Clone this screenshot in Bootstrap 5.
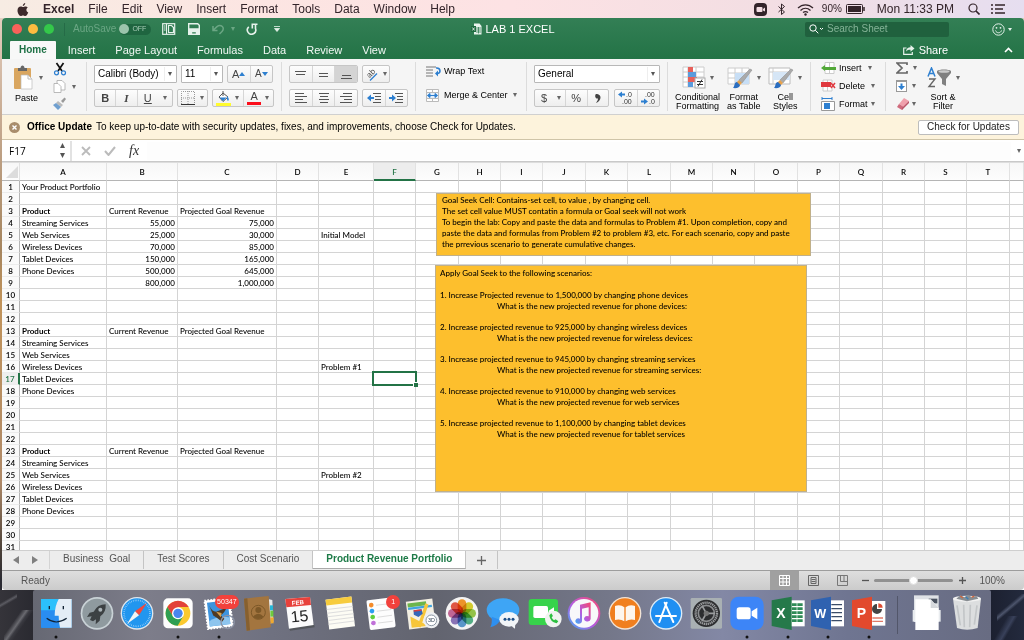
<!DOCTYPE html>
<html lang="en">
<head>
<meta charset="utf-8">
<meta name="viewport" content="width=device-width, initial-scale=1">
<title>LAB 1 EXCEL</title>
<link href="https://cdn.jsdelivr.net/npm/bootstrap@5.3.0/dist/css/bootstrap.min.css" rel="stylesheet">
<style>
:root { --green:#237346; --line:#d4d4d4; }
body { font-family:"Liberation Sans",Arial,sans-serif; font-size:10px; line-height:12px; color:#111; height:100vh; min-height:560px; overflow:hidden;
  background:linear-gradient(180deg,#e9d5c8 0,#c9ad95 110px,#a5855f 250px,#c1935a 300px,#b08a68 480px,#4a4038 550px,#2b2b33 580px); }
a { color:inherit; text-decoration:none; }
button { font:inherit; color:inherit; padding:0; border:0; background:none; display:inline-flex; align-items:center; justify-content:center; }
svg { display:block; flex:none; }
.tri { width:0; height:0; flex:none; border:2px solid transparent; border-top:4px solid #666; border-bottom:0; }

/* system menu bar */
.menubar { height:18px; font-size:12px; color:#33242a; background:linear-gradient(90deg,#f7ece3 0,#fce5e2 25%,#fde2e4 50%,#f3dee3 75%,#e6def0 100%); padding:0 18px 0 17px; }
.menubar nav { gap:14px; }

/* window */
.win { margin-left:2px; border-radius:4px 4px 0 0; min-height:0; background:#fff; }
.head { background:linear-gradient(180deg,#337f55,#237346); color:#fff; border-radius:4px 4px 0 0; }
.titlebar { height:22px; }
.light { width:10px; height:10px; border-radius:50%; }
.autosave { color:#6ba684; }
.toggle { width:32px; height:11px; border-radius:6px; background:#1f6540; color:#a9cdb8; font-size:7px; }
.toggle::before { content:""; width:10px; height:10px; border-radius:50%; background:#9cc4ac; margin-right:3px; }
.doc { font-size:11px; }
.search { width:144px; height:15px; background:#20613e; border-radius:2px; }
.search input { background:none; border:0; outline:0; width:110px; padding:0; color:#fff; font-size:10px; line-height:12px; }
.search input::placeholder { color:#84b397; opacity:1; }
.rtabs { height:19px; font-size:11px; }
.rtabs .nav-link { color:#f1f8f4; padding:0 10px; height:18px; line-height:18px; font-size:11px; border:0; border-radius:0; }
.rtabs .nav-link.active { background:#f8f8f8; color:#1e7145; font-weight:bold; font-size:10px; padding:0 9px; margin-right:2px; border-radius:1px 1px 0 0; }

/* ribbon */
.ribbon { height:56px; background:#f5f5f5; border-bottom:1px solid #d0d0d0; font-size:9px; line-height:10px; color:#000; }
.ribbon button { white-space:nowrap; }
.rg { border-right:1px solid #dcdcdc; padding:0 7px; margin:3px 0; height:49px; flex:none; }
.rg.wide { padding:0 10px; }
.rrows { display:flex; flex-direction:column; gap:6px; padding-top:3px; }
.rrows > div { display:flex; gap:4px; height:18px; }
.bx { display:flex; height:18px; border:1px solid #c6c6c6; border-radius:2px; background:linear-gradient(#fdfdfd,#eee); overflow:hidden; }
.bx button { flex:1 1 0; font-size:11px; color:#444; gap:4px; }
.bx button + button { border-left:1px solid #d6d6d6; }
.bx button.on { background:#d4d4d4; }
.bx button.drop { flex:0 0 14px; border-left:0; }
.pick { height:18px; border:1px solid #b8b8b8; border-radius:1px; appearance:none; padding:0 0 0 3px; font-size:10px; color:#000;
  background:#fff url("data:image/svg+xml,%3Csvg xmlns='http://www.w3.org/2000/svg' width='12' height='16'%3E%3Cpath d='M0 1v14' stroke='%23ddd'/%3E%3Cpath d='M4 6h4l-2 4z' fill='%23555'/%3E%3C/svg%3E") right center no-repeat; }
.w28{width:28px}.w31{width:31px}.w42{width:42px}.w46{width:46px}.w62{width:62px}.w69{width:69px}.w75{width:75px}.w79{width:79px}.w83{width:83px}.w126{width:126px}
.big { flex-direction:column; justify-content:flex-start; line-height:9px; }
.big .pic { display:flex; align-items:center; gap:4px; height:31px; }
.sm { height:18px; justify-content:flex-start; }

/* messages and formula bar */
.update { height:25px; background:#fdf3dc; border-bottom:1px solid #cfc4a8; padding:0 5px 0 7px; color:#000; }
.update button { width:101px; height:15px; border:1px solid #bdbdbd; border-radius:2px; background:#fff; color:#222; }
.fbar { height:22px; border-bottom:1px solid #c9c9c9; background:#fff; }
.namebox { width:50px; border:0; outline:0; padding:0 0 0 7px; font:10px "Open Sans","Noto Sans",sans-serif; color:#000; }
.formula { border:0; outline:0; background:#fdfdfd; height:18px; min-width:0; }

/* sheet */
.sheet { position:relative; overflow:hidden; min-height:0; font-family:Lato,Carlito,sans-serif; font-size:8px; border-top:1px solid #ddd; background:#fff; }
.grid { table-layout:fixed; width:100%; border-collapse:separate; border-spacing:0; line-height:10px; font-weight:500; color:#000; }
.grid th, .grid td { padding:1px 2px 0; height:12px; border-right:1px solid var(--line); border-bottom:1px solid var(--line); white-space:nowrap; overflow:visible; font-size:8px; }
.grid th { font-weight:600; text-align:center; padding:1px 0 0; }
.grid thead th { height:18px; background:linear-gradient(#f7f7f7,#fdfdfd); border-bottom:1px solid #b5b5b5; border-right-color:#e2e2e2; }
.grid tbody th { background:#fafafa; border-right-color:#b5b5b5; border-bottom-color:#ececec; }
.grid thead th.sel { background:#ededed; color:var(--green); border-bottom:2px solid var(--green); }
.grid tbody th.sel { color:var(--green); border-right:2px solid var(--green); background:#eee; }
.grid td.num { text-align:right; }
.grid td.cur { position:relative; }
.grid td.cur::before { content:""; position:absolute; inset:-2px; border:2px solid var(--green); }
.grid td.cur::after { content:""; position:absolute; right:-3px; bottom:-3px; width:5px; height:5px; background:var(--green); border:1px solid #fff; border-width:1px 0 0 1px; }
.corner { width:0; height:0; margin:0 1px 1px auto; border-left:12px solid transparent; border-bottom:12px solid #dcdcdc; }
.note { position:absolute; background:#fdbf2d; border:1px solid #c0b08a; line-height:11px; font-size:8px; color:#000; white-space:nowrap; font-weight:500; }
.note p { margin:0 0 10px; }
.note .ask { display:block; padding-left:57px; }
.note1 { left:434px; top:30px; width:375px; height:63px; padding:1px 5px; }
.note2 { left:433px; top:102px; width:372px; height:227px; padding:2px 4px; }
.note2 .lead-in { margin-bottom:11px; }

/* sheet tabs and status bar */
.stabs { height:21px; background:#ededed; border-top:1px solid #cfcfcf; border-bottom:1px solid #9d9d9d; color:#555; }
.stabs .nav-link { color:#555; font-size:10px; line-height:16px; height:18px; padding:0 13px; border:0; border-right:1px solid #c4c4c4; border-radius:0; }
.stabs .nav-link.active { background:#fff; color:#1e7b48; font-weight:bold; border-bottom:1px solid #aaa; }
.status { height:19px; background:linear-gradient(#dedede,#cbcbcb); color:#555; border-radius:0 0 4px 4px; }
.views button { width:29px; height:19px; }
.views .on { background:#a0a0a0; }
.zoomer { appearance:none; width:79px; height:12px; background:none; margin:0 6px 0 5px; }
.zoomer::-webkit-slider-runnable-track { height:3px; border-radius:2px; background:#919191; }
.zoomer::-webkit-slider-thumb { appearance:none; width:9px; height:9px; margin-top:-3px; border-radius:50%; background:#fff; border:1px solid #ddd; }

/* dock */
.desk { height:50px; padding:0 33px; background:
  linear-gradient(150deg,transparent 40%,#5b5b62 48%,transparent 56%) 0 0/17px 23px no-repeat,
  linear-gradient(125deg,transparent 35%,#6a6a70 46%,#3b3b42 52%,transparent 60%) 4px 20px/29px 30px no-repeat,
  linear-gradient(140deg,transparent 40%,#4d556c 48%,transparent 55%) right 4px/27px 28px no-repeat,
  linear-gradient(120deg,transparent 35%,#39415a 50%,transparent 58%) right 100%/33px 24px no-repeat,
  linear-gradient(90deg,#35343a,#2a2a31 33px,#1c2030 calc(100% - 33px),#232a3d); }
.dock { background:linear-gradient(90deg,#666873,#7d7d8a 12%,#6f7180 25%,#62646f 42%,#747789 60%,#8388a5 72%,#6f7591 85%,#686c82); padding:0 6px 0 5px; border-radius:2px 2px 0 0; }
.dock a { position:relative; width:36px; height:50px; }
.dock svg { width:36px; height:50px; overflow:visible; }
.dock .sep { width:1px; height:38px; background:#52566a; margin:0 10px; }
.petals rect { mix-blend-mode:multiply; }
.pip { position:absolute; top:5px; right:-5px; min-width:14px; height:14px; line-height:14px; padding:0 2px; border-radius:7px; background:#f2413c; color:#fff; font-size:7px; text-align:center; }
</style>
</head>
<body class="d-flex flex-column">

<header class="menubar d-flex align-items-center flex-shrink-0">
  <nav class="d-flex align-items-center" aria-label="Menu bar">
    <a href="#" aria-label="Apple"><svg width="12" height="13" viewBox="0 0 22 26"><path fill="#3d2a2b" d="M15.500 0c.2 3-2.500 6-5 6 0-3 2.500-5.500 5-6zM20.500 9c-4 2.500-3.500 8 1 9.800C20 22.500 18 26 15.500 26c-1.800 0-2.500-1.100-4.500-1.100S8.200 26 6.500 26C3 26 0 19.500 0 15 0 10 3 7 6.500 7c2 0 3.300 1.200 4.700 1.200S14 6.900 16.300 6.900c1.700 0 3.200.8 4.200 2.100z"/></svg></a>
    <a href="#" class="fw-bold">Excel</a><a href="#">File</a><a href="#">Edit</a><a href="#">View</a><a href="#">Insert</a><a href="#">Format</a><a href="#">Tools</a><a href="#">Data</a><a href="#">Window</a><a href="#">Help</a>
  </nav>
  <div class="d-flex align-items-center ms-auto">
    <svg width="13" height="13" viewBox="0 0 13 13"><rect width="13" height="13" rx="4" fill="#33242a"/><rect x="2.500" y="4" width="6" height="5" rx="1" fill="#f3dee3"/><path d="M9 6l2-1.500v4L9 7.500z" fill="#f3dee3"/></svg>
    <svg class="ms-2 me-1" width="14" height="13" viewBox="0 0 14 13"><path d="M3.500 3.500l6 5.500-3 2.500V1l3 2.500-6 5.500" fill="none" stroke="#33242a"/></svg>
    <svg class="me-2 ms-1" width="17" height="13" viewBox="0 0 17 13"><g fill="none" stroke="#33242a" stroke-width="1.300"><path d="M1 5c4.500-4.300 10.500-4.300 15 0M3.500 7.400c3-2.800 7-2.800 10 0M6 9.600c1.600-1.300 3.400-1.300 5 0"/></g><circle cx="8.500" cy="11.500" r="1.200" fill="#33242a"/></svg>
    <span style="font-size:10px">90%</span>
    <svg class="ms-1 me-2" width="20" height="10" viewBox="0 0 20 10"><rect x=".5" y=".5" width="16" height="9" rx="1" fill="none" stroke="#33242a"/><rect x="2" y="2" width="13" height="6" fill="#33242a"/><path d="M18 3v4" stroke="#33242a" stroke-width="1.500"/></svg>
    <span style="margin:0 14px 0 3px">Mon 11:33 PM</span>
    <svg width="12" height="12" viewBox="0 0 12 12"><circle cx="5" cy="5" r="4" fill="none" stroke="#33242a" stroke-width="1.200"/><path d="M8 8l3.500 3.500" stroke="#33242a" stroke-width="1.600"/></svg>
    <svg class="ms-2" width="18" height="10" viewBox="0 0 18 10"><path d="M3 1h2M3 5h2M3 9h2M7 1h10M7 5h8M7 9h10" stroke="#33242a" stroke-width="1.400"/></svg>
  </div>
</header>

<main class="win d-flex flex-column flex-grow-1">
  <div class="head flex-shrink-0">
    <div class="titlebar d-flex align-items-center">
      <div class="d-flex align-items-center" style="flex:1 1 0">
        <div class="d-flex" style="gap:6px;margin-left:10px"><span class="light" style="background:#f9615a"></span><span class="light" style="background:#fdbc40"></span><span class="light" style="background:#34c84a"></span></div>
        <span style="width:1px;height:13px;background:#256b47;margin:0 8px 0 10px"></span>
        <span class="autosave">AutoSave</span>
        <button class="toggle justify-content-start" type="button" style="margin-left:3px">OFF</button>
        <button type="button" aria-label="Sidebar" style="margin-left:11px"><svg width="14" height="12" viewBox="0 0 14 12"><rect x=".7" y=".7" width="12" height="10.600" fill="none" stroke="#e6f2eb" stroke-width="1.200"/><path d="M4.500 1v10M2 3h1.500M2 5h1.500M2 7h1.500" stroke="#e6f2eb"/><path d="M6.500 2.500h3l2 2v5h-5z" fill="none" stroke="#e6f2eb" stroke-width="1.200"/></svg></button>
        <button type="button" aria-label="Save" style="margin-left:12px"><svg width="12" height="12" viewBox="0 0 12 12"><path d="M.7.7h9l1.600 1.600v9H.7zM1 6h10M3.500 11V8.500h5V11" fill="none" stroke="#e6f2eb" stroke-width="1.400"/><path d="M1 6h10v5H8.500V8.500h-5V11H1z" fill="#e6f2eb"/></svg></button>
        <button type="button" aria-label="Undo" style="margin-left:12px;gap:6px"><svg width="13" height="11" viewBox="0 0 13 11"><path d="M1 2v4.500h4.500M1.500 6L5 2.600C9-.5 13.500 4 10 7.500L7.500 10" fill="none" stroke="#6ba684" stroke-width="1.500"/></svg><i class="tri" style="border-top-color:#6ba684"></i></button>
        <button type="button" aria-label="Redo" style="margin-left:11px"><svg width="12" height="12" viewBox="0 0 12 12"><path d="M2.800 3.800A4.200 4.200 0 1 0 9.500 5.500V1.200M11.500 1.200H6.300V5.500" fill="none" stroke="#e6f2eb" stroke-width="1.600"/></svg></button>
        <button type="button" aria-label="Customize toolbar" style="margin-left:16px"><svg width="6" height="6" viewBox="0 0 6 6"><path d="M0 .5h6M.5 2.500h5L3 5.500z" stroke="#e6f2eb" stroke-width=".8" fill="#e6f2eb"/></svg></button>
      </div>
      <div class="doc d-flex align-items-center" style="gap:3px">
        <svg width="11" height="12" viewBox="0 0 11 12"><path d="M3 .5h5.500L10.500 3v8.500H3z" fill="#e9f3ed"/><path d="M5 5h5M5 7h5M5 9h5M7.500 4v6.500" stroke="#237346" stroke-width=".7"/><rect y="3" width="5" height="6" fill="#1d6a3f"/><path d="M1.300 4.500l2.400 3M3.700 4.500l-2.400 3" stroke="#fff" stroke-width=".8"/></svg>
        <span>LAB 1 EXCEL</span>
      </div>
      <div class="d-flex align-items-center justify-content-end" style="flex:1 1 0">
        <div class="search d-flex align-items-center px-1" style="margin-right:43px"><svg width="15" height="10" viewBox="0 0 15 10"><circle cx="4" cy="4" r="3.200" fill="none" stroke="#fff"/><path d="M6.300 6.300L9.300 9.300M11 4l1.500 1.500L14 4" fill="none" stroke="#fff"/></svg><input type="text" placeholder="Search Sheet" aria-label="Search Sheet" style="margin-left:3px"></div>
        <button type="button" aria-label="Feedback" style="margin-right:12px;gap:3px"><svg width="13" height="13" viewBox="0 0 13 13"><circle cx="6.500" cy="6.500" r="5.700" fill="none" stroke="#e6f2eb"/><path d="M3.500 7.500c1 3 5 3 6 0" fill="none" stroke="#e6f2eb"/><circle cx="4.500" cy="4.800" r=".9" fill="#e6f2eb"/><circle cx="8.500" cy="4.800" r=".9" fill="#e6f2eb"/></svg><i class="tri" style="border-top-width:3px;border-top-color:#e6f2eb"></i></button>
      </div>
    </div>
    <div class="rtabs d-flex align-items-end">
      <nav class="nav flex-nowrap ms-2"><a class="nav-link active" href="#">Home</a><a class="nav-link" href="#">Insert</a><a class="nav-link" href="#">Page Layout</a><a class="nav-link" href="#">Formulas</a><a class="nav-link" href="#">Data</a><a class="nav-link" href="#">Review</a><a class="nav-link" href="#">View</a></nav>
      <div class="ms-auto d-flex align-items-center" style="height:19px;padding-right:11px">
        <button type="button" style="gap:4px"><svg width="12" height="11" viewBox="0 0 12 11"><path d="M3.500 4H.7v6.300h8.600V8" fill="none" stroke="#e6f2eb" stroke-width="1.200"/><path d="M3 7.500C3.500 4.500 5 3.200 7.500 3.200V1L11.500 4.500l-4 3.300V5.700C5.500 5.700 4 6 3 7.500z" fill="#e6f2eb"/></svg>Share</button>
        <button type="button" aria-label="Collapse ribbon" style="margin-left:56px"><svg width="9" height="6" viewBox="0 0 9 6"><path d="M1 5l3.500-3.500L8 5" fill="none" stroke="#fff" stroke-width="1.600"/></svg></button>
      </div>
    </div>
  </div>

  <div class="ribbon d-flex flex-shrink-0">
    <div class="rg d-flex" style="width:85px;padding:0 0 0 10px">
      <button type="button" class="big" style="width:32px">
        <span class="pic"><svg width="22" height="26" viewBox="0 0 22 26"><rect x="1" y="3" width="17" height="21" rx="1" fill="#d9a660"/><path d="M5 6V3h2.500c0-3.500 4-3.500 4 0H14v3z" fill="#666"/><path d="M8 10h7l4 4v10H8z" fill="#fff" stroke="#bbb" stroke-width=".7"/><path d="M15 10v4h4" fill="none" stroke="#bbb"/></svg><i class="tri"></i></span>
        <span class="align-self-start" style="margin-top:1px;margin-left:3px">Paste</span>
      </button>
      <div class="d-flex flex-column" style="margin-left:9px;gap:4px">
        <button type="button" aria-label="Cut" class="justify-content-start"><svg width="14" height="14" viewBox="0 0 14 14"><path d="M3.500 1L9 9M10.500 1L5 9" stroke="#111" stroke-width="1.700"/><circle cx="3.500" cy="10.800" r="2" fill="none" stroke="#2d7fd0" stroke-width="1.200"/><circle cx="10.500" cy="10.800" r="2" fill="none" stroke="#2d7fd0" stroke-width="1.200"/></svg></button>
        <button type="button" aria-label="Copy" style="gap:5px"><svg width="14" height="13" viewBox="0 0 14 13"><path d="M4 .5h5l3 3V10H4z" fill="#fff" stroke="#aaa" stroke-width=".8"/><path d="M1 3.500h4l3 3V12.500H1z" fill="#fff" stroke="#aaa" stroke-width=".8"/></svg><i class="tri"></i></button>
        <button type="button" aria-label="Format painter" class="justify-content-start"><svg width="14" height="13" viewBox="0 0 14 13"><path d="M8 4l3.500-3.500 1.500 1.500L10 6z" fill="#999"/><path d="M5 4l5 4-2 2-5-4z" fill="#bbb"/><path d="M3 6l5 4-3 3-5-5z" fill="#6f9fcf"/></svg></button>
      </div>
    </div>

    <div class="rg rrows">
      <div>
        <select class="pick w83" aria-label="Font"><option>Calibri (Body)</option></select>
        <select class="pick w42" aria-label="Font size"><option>11</option></select>
        <span class="bx w46"><button type="button" style="gap:0">A<svg width="6" height="4" viewBox="0 0 6 4"><path d="M0 4l3-4 3 4z" fill="#2d7fd0"/></svg></button><button type="button" style="gap:0;font-size:10px">A<svg width="6" height="4" viewBox="0 0 6 4"><path d="M0 0h6L3 4z" fill="#2d7fd0"/></svg></button></span>
      </div>
      <div>
        <span class="bx w79"><button type="button" class="fw-bold">B</button><button type="button" style="font-family:'Liberation Serif',serif"><b><i>I</i></b></button><button type="button" class="text-decoration-underline">U</button><button type="button" class="drop" aria-label="Underline style"><i class="tri"></i></button></span>
        <span class="bx w31"><button type="button" aria-label="Borders"><svg width="14" height="14" viewBox="0 0 14 14"><path d="M.5 13V.5h13V13M7 0v13M0 7h14" fill="none" stroke="#999" stroke-dasharray="1 1"/><path d="M0 13.500h14" stroke="#333"/></svg></button><button type="button" class="drop" aria-label="Border options" style="flex-basis:10px"><i class="tri"></i></button></span>
        <span class="bx w62"><button type="button" aria-label="Fill color"><svg width="15" height="15" viewBox="0 0 15 15"><path d="M3 6l4-4 5 4-5 4.500z" fill="#fff" stroke="#555"/><path d="M7 0v5" stroke="#555"/><path d="M11 5c2 2 2.500 4 1 5-1.500-1-1-3-1-5zM3.500 6.500h7L7 10z" fill="#2d7fd0"/><rect x="0" y="12" width="15" height="3" fill="#fffb2e"/></svg><i class="tri"></i></button><button type="button" aria-label="Font color"><span class="d-flex flex-column align-items-center" style="line-height:10px">A<span style="width:14px;height:3px;background:#fb0d1b;margin-top:1px"></span></span><i class="tri"></i></button></span>
      </div>
    </div>

    <div class="rg rrows">
      <div>
        <span class="bx w69"><button type="button" aria-label="Align top"><svg width="11" height="12"><path d="M0 3.500h11M1 6.500h9" stroke="#555"/></svg></button><button type="button" aria-label="Align middle"><svg width="11" height="12"><path d="M1 5.500h9M1 8.500h9" stroke="#555"/></svg></button><button type="button" class="on" aria-label="Align bottom"><svg width="11" height="12"><path d="M1 7.500h9M0 10.500h11" stroke="#555"/></svg></button></span>
        <span class="bx w28"><button type="button" aria-label="Orientation"><svg width="14" height="14" viewBox="0 0 14 14"><text x="2" y="9" font-size="8" fill="#444" transform="rotate(-45 6 7)">ab</text><path d="M5 13.500l7-7" stroke="#2d7fd0" stroke-width="1.200"/></svg><i class="tri"></i></button></span>
      </div>
      <div>
        <span class="bx w69"><button type="button" aria-label="Align left"><svg width="12" height="12"><path d="M0 1.500h9M0 4.500h12M0 7.500h8M0 10.500h12" stroke="#555"/></svg></button><button type="button" aria-label="Align center"><svg width="12" height="12"><path d="M1 1.500h10M2 4.500h8M1 7.500h10M2 10.500h8" stroke="#555"/></svg></button><button type="button" aria-label="Align right"><svg width="12" height="12"><path d="M3 1.500h9M0 4.500h12M4 7.500h8M0 10.500h12" stroke="#555"/></svg></button></span>
        <span class="bx w46"><button type="button" aria-label="Decrease indent"><svg width="14" height="12" viewBox="0 0 14 12"><path d="M0 6l4-3.500V5h3v2H4v2.500z" fill="#2d7fd0"/><path d="M6 1.500h8M8 4.500h6M8 7.500h6M6 10.500h8" stroke="#555"/></svg></button><button type="button" aria-label="Increase indent"><svg width="14" height="12" viewBox="0 0 14 12"><path d="M7 6L3 2.500V5H0v2h3v2.500z" fill="#2d7fd0"/><path d="M6 1.500h8M8 4.500h6M8 7.500h6M6 10.500h8" stroke="#555"/></svg></button></span>
      </div>
    </div>

    <div class="rg wide rrows" style="width:111px">
      <div><button type="button" style="gap:3px"><svg width="15" height="12" viewBox="0 0 15 12"><path d="M0 2h10M0 5h7M0 8h7M0 11h7" stroke="#777"/><path d="M10 3c5-.5 5 5.500 1.500 5.500" fill="none" stroke="#2d7fd0" stroke-width="1.600"/><path d="M9 8.500L12 5.500v6z" fill="#2d7fd0"/></svg>Wrap Text</button></div>
      <div><button type="button" style="gap:5px"><svg width="13" height="13" viewBox="0 0 13 13"><path d="M.5.500h12v12H.5zM6.500 0v3M6.500 10v3" fill="#fff" stroke="#bbb"/><path d="M.5 3.500h12v6H.5z" fill="#e6f0fa" stroke="#bbb"/><path d="M1.500 6.500L4 4.500v4zM11.500 6.500L9 4.500v4zM3 6.500h7" fill="#2d7fd0" stroke="#2d7fd0"/></svg>Merge &amp; Center<i class="tri"></i></button></div>
    </div>

    <div class="rg rrows">
      <div><select class="pick w126" aria-label="Number format"><option>General</option></select></div>
      <div>
        <span class="bx w75"><button type="button" style="flex:0 0 18px">$</button><button type="button" class="drop" aria-label="Currency options" style="flex-basis:12px"><i class="tri"></i></button><button type="button">%</button><button type="button" aria-label="Comma style"><svg width="6" height="9" viewBox="0 0 6 9"><path d="M1 0c6-.5 6 7 0 9 1.500-2 2-3.500 2-4.500C0 5-.5 1 1 0z" fill="#444"/></svg></button></span>
        <span class="bx w46" style="margin-left:1px"><button type="button" aria-label="Increase decimal"><svg width="15" height="14" viewBox="0 0 15 14"><path d="M0 3.500L4 .5v2h3v2H4v2z" fill="#2d7fd0"/><text x="8" y="6" font-size="7" fill="#333">.0</text><text x="4" y="13" font-size="7" fill="#333">.00</text></svg></button><button type="button" aria-label="Decrease decimal"><svg width="15" height="14" viewBox="0 0 15 14"><text x="4" y="6" font-size="7" fill="#333">.00</text><path d="M7 10.500L3 7.500v2H0v2h3v2z" fill="#2d7fd0"/><text x="8" y="13" font-size="7" fill="#333">.0</text></svg></button></span>
      </div>
    </div>

    <div class="rg d-flex" style="width:143px;gap:6px">
      <button type="button" class="big" style="width:45px"><span class="pic"><svg width="24" height="24" viewBox="0 0 24 24"><path d="M1 1h21v20H1zM1 6h21M1 11h21M1 16h21M6 1v20M14 1v20" fill="#fff" stroke="#ccc"/><path d="M6 1h5v5H6zM6 11h9v5H6z" fill="#e8605a"/><path d="M6 6h8v5H6zM6 16h5v5H6z" fill="#5b9bdc"/><rect x="13" y="12" width="10" height="10" fill="#fff" stroke="#aaa"/><path d="M15 15.500h6M15 18.500h6M20 13.500l-4 7" stroke="#333"/></svg><i class="tri"></i></span><span>Conditional<br>Formatting</span></button>
      <button type="button" class="big" style="width:36px"><span class="pic"><svg width="26" height="24" viewBox="0 0 26 24"><path d="M1 2h21v16H1zM1 7h21M1 12h21M8 2v16M15 2v16" fill="#fff" stroke="#ccc"/><path d="M8 7h14v11H8z" fill="#c7def5"/><path d="M25 4L15 17l-3-3L23 3z" fill="#aaa" stroke="#888" stroke-width=".5"/><path d="M15 17l-3-3-3 3 3 3z" fill="#e8a24a"/><path d="M10 16c-3 0-2 4-4 6 4 .5 7-.5 7-3z" fill="#2d6fc0"/></svg><i class="tri"></i></span><span>Format<br>as Table</span></button>
      <button type="button" class="big" style="width:36px"><span class="pic"><svg width="26" height="24" viewBox="0 0 26 24"><path d="M1 2h21v16H1z" fill="#fff" stroke="#bbb"/><path d="M1 6h21M5 2v16" stroke="#ccc"/><path d="M5 6h17v8H5z" fill="#d6e6f6"/><path d="M25 4L15 17l-3-3L23 3z" fill="#aaa" stroke="#888" stroke-width=".5"/><path d="M15 17l-3-3-3 3 3 3z" fill="#e8a24a"/><path d="M10 16c-3 0-2 4-4 6 4 .5 7-.5 7-3z" fill="#2d6fc0"/></svg><i class="tri"></i></span><span>Cell<br>Styles</span></button>
    </div>

    <div class="rg wide d-flex flex-column align-items-start" style="width:75px">
      <button type="button" class="sm" style="gap:3px;height:13px"><svg width="15" height="12" viewBox="0 0 15 12"><path d="M4 .5h9v11H4zM8.500 0v12" fill="#fff" stroke="#ccc"/><path d="M0 6l4-3v2h11v3H4v1z" fill="#52a838"/></svg>Insert<i class="tri" style="margin-left:3px"></i></button>
      <button type="button" class="sm" style="gap:3px;height:23px"><svg width="15" height="13" viewBox="0 0 15 13"><path d="M2 1h9v11H2zM6.500 1v11" fill="#fff" stroke="#ccc"/><path d="M0 3h10v5H0z" fill="#e03a40"/><path d="M10 4l4 5M14 4l-4 5" stroke="#e03a40" stroke-width="1.500"/></svg>Delete<i class="tri" style="margin-left:3px"></i></button>
      <button type="button" class="sm" style="gap:3px;height:14px"><svg width="15" height="14" viewBox="0 0 15 14"><path d="M1 1.500h10M1 0v3M11 0v3" stroke="#2d7fd0"/><path d="M.5 4.500h13v9H.5z" fill="#fff" stroke="#999"/><path d="M3 6h6v6H3z" fill="#2d7fd0"/></svg>Format<i class="tri"></i></button>
    </div>

    <div class="d-flex" style="padding:0 0 0 10px">
      <div class="d-flex flex-column" style="width:32px">
        <button type="button" class="sm" aria-label="AutoSum" style="gap:5px"><svg width="12" height="12" viewBox="0 0 12 12"><path d="M11 3V1H1l5 5-5 5h10V9" fill="none" stroke="#666" stroke-width="1.700"/></svg><i class="tri"></i></button>
        <button type="button" class="sm" aria-label="Fill" style="gap:4px"><svg width="12" height="12" viewBox="0 0 12 12"><rect x=".5" y=".5" width="10" height="11" fill="#fff" stroke="#999"/><path d="M0 1.500h11" stroke="#999"/><path d="M4.500 3.500h2V6H9l-3.500 4L2 6h2.500z" fill="#2d7fd0"/></svg><i class="tri"></i></button>
        <button type="button" class="sm" aria-label="Clear" style="gap:2px"><svg width="14" height="12" viewBox="0 0 14 12"><path d="M8 0l5 3-5 6-5-3z" fill="#f0a0ac"/><path d="M3 6l5 3-2 3-5-3z" fill="#cf6a7c"/><path d="M13 3v2l-7 7V10z" fill="#b85468"/></svg><i class="tri"></i></button>
      </div>
      <button type="button" class="big align-items-center" style="width:30px;padding-top:3px"><span class="pic"><svg width="25" height="22" viewBox="0 0 25 22"><path d="M1 9.500L4.500 1 8 9.500M2.500 6.500h4" fill="none" stroke="#2d7fd0" stroke-width="1.500"/><path d="M2 12h6l-6 7.500h6" fill="none" stroke="#666" stroke-width="1.400"/><path d="M10 4c2-2 12-2 14 0v2l-5 6v7l-4-2v-5l-5-6z" fill="#808080"/><ellipse cx="17" cy="4.500" rx="5.500" ry="1.300" fill="#ccc"/></svg><i class="tri"></i></span><span>Sort &amp;<br>Filter</span></button>
    </div>
  </div>

  <div class="update d-flex align-items-center flex-shrink-0">
    <button type="button" aria-label="Dismiss" style="width:11px;border:0;background:none"><svg width="11" height="11" viewBox="0 0 11 11"><circle cx="5.500" cy="5.500" r="5.500" fill="#a98d6c"/><path d="M3.500 3.500l4 4M7.500 3.500l-4 4" stroke="#fff" stroke-width="1.400"/></svg></button>
    <b style="margin:0 4px 0 7px">Office Update</b><span>To keep up-to-date with security updates, fixes, and improvements, choose Check for Updates.</span>
    <button type="button" class="ms-auto">Check for Updates</button>
  </div>

  <div class="fbar d-flex align-items-center flex-shrink-0">
    <input class="namebox" type="text" value="F17" aria-label="Name box">
    <svg style="margin-left:7px" width="7" height="15" viewBox="0 0 7 15"><path d="M1 5l2.500-5L6 5zM1 10l2.500 5L6 10z" fill="#555"/></svg>
    <span style="width:2px;height:20px;background:#e2e2e2;margin:0 9px 0 4px"></span>
    <button type="button" aria-label="Cancel"><svg width="10" height="10" viewBox="0 0 10 10"><path d="M1 1l8 8M9 1L1 9" stroke="#bbb" stroke-width="1.800"/></svg></button>
    <button type="button" aria-label="Enter" style="margin-left:13px"><svg width="12" height="10" viewBox="0 0 12 10"><path d="M1 5l3.500 4L11 1" fill="none" stroke="#bbb" stroke-width="2"/></svg></button>
    <button type="button" aria-label="Insert function" style="margin:0 8px 0 13px;font:italic 14px 'Liberation Serif',serif;color:#333">fx</button>
    <input class="formula flex-grow-1" type="text" aria-label="Formula">
    <button type="button" aria-label="Expand" style="margin:0 3px 0 6px"><i class="tri"></i></button>
  </div>

  <div class="sheet flex-grow-1">
    <table class="grid">
      <colgroup id="cols"></colgroup>
      <thead><tr id="letters"></tr></thead>
      <tbody id="rows"></tbody>
    </table>
    <div class="note note1">Goal Seek Cell: Contains-set cell, to value , by changing cell.<br>The set cell value MUST contatin a formula or Goal seek will not work<br>To begin the lab: Copy and paste the data and formulas to Problem #1. Upon completion, copy and<br>paste the data and formulas from Problem #2 to problem #3, etc. For each scenario, copy and paste<br>the prrevious scenario to generate cumulative changes.</div>
    <div class="note note2">
      <p class="lead-in">Apply Goal Seek to the following scenarios:</p>
      <p>1. Increase Projected revenue to 1,500,000 by changing phone devices<span class="ask">What is the new projected revenue for phone devices:</span></p>
      <p>2. Increase projected revenue to 925,000 by changing wireless devices<span class="ask">What is the new projected revenue for wireless devices:</span></p>
      <p>3. Increase projected revenue to 945,000 by changing streaming services<span class="ask">What is the new projected revenue for streaming services:</span></p>
      <p>4. Increase projected revenue to 910,000 by changing web services<span class="ask">What is the new projected revenue for web services</span></p>
      <p>5. Increase projected revenue to 1,100,000 by changing tablet devices<span class="ask">What is the new projected revenue for tablet services</span></p>
    </div>
  </div>

  <div class="stabs d-flex flex-shrink-0">
    <div class="d-flex" style="width:48px;height:18px;gap:13px;padding-left:11px;border-right:1px solid #d4d4d4">
      <button type="button" aria-label="Previous sheet"><svg width="6" height="8"><path d="M6 0v8L0 4z" fill="#808080"/></svg></button><button type="button" aria-label="Next sheet"><svg width="6" height="8"><path d="M0 0v8l6-4z" fill="#808080"/></svg></button>
    </div>
    <nav class="nav flex-nowrap"><a class="nav-link" href="#">Business&nbsp; Goal</a><a class="nav-link" href="#">Test Scores</a><a class="nav-link" href="#">Cost Scenario</a><a class="nav-link active" href="#">Product Revenue Portfolio</a></nav>
    <button type="button" aria-label="Add sheet" style="width:32px;height:18px;border-right:1px solid #c4c4c4"><svg width="9" height="9"><path d="M4.500 0v9M0 4.500h9" stroke="#666" stroke-width="1.300"/></svg></button>
  </div>
  <div class="status d-flex align-items-center flex-shrink-0">
    <span style="margin-left:19px">Ready</span>
    <div class="views d-flex ms-auto">
      <button type="button" class="on" aria-label="Normal view"><svg width="11" height="11" viewBox="0 0 11 11"><path d="M.5.500h10v10H.5zM.5 3.500h10M.5 7h10M4 .5v10M7.500.500v10" fill="none" stroke="#fff"/></svg></button>
      <button type="button" aria-label="Page layout view"><svg width="11" height="11" viewBox="0 0 11 11"><path d="M.5.500h10v10H.5zM3 2.500h5v6H3zM3.500 4.500h4M3.500 6.500h4" fill="none" stroke="#666"/></svg></button>
      <button type="button" aria-label="Page break view"><svg width="11" height="11" viewBox="0 0 11 11"><path d="M.5.500h10v10H.5zM3.500.500v6h7M7 .5v6" fill="none" stroke="#777"/></svg></button>
    </div>
    <button type="button" aria-label="Zoom out" style="margin-left:5px"><svg width="7" height="9"><path d="M0 4.500h7" stroke="#555" stroke-width="1.300"/></svg></button>
    <input class="zoomer" type="range" min="0" max="100" value="50" aria-label="Zoom">
    <button type="button" aria-label="Zoom in"><svg width="7" height="9"><path d="M3.500 1v7M0 4.500h7" stroke="#555" stroke-width="1.300"/></svg></button>
    <span style="margin:0 19px 0 13px">100%</span>
  </div>
</main>

<footer class="desk flex-shrink-0">
  <div class="dock d-flex align-items-center h-100">
    <nav class="d-flex justify-content-between flex-grow-1" aria-label="Applications">
      <a href="#" aria-label="Finder"><svg viewBox="0 0 108 150"><rect x="9" y="27" width="92" height="86" rx="3" fill="#1d9bf3"/><path d="M9 60V30q0-3 3-3h50q-12 22-12 50h12q0 20 4 36H12q-3 0-3-3z" fill="#2a8df0"/><path d="M9 27h53q-8 14-11 34H9z" fill="#2cc0fb"/><path d="M62 27h39v86H66q-4-16-4-36H50q0-28 12-50z" fill="#e4edf6"/><path d="M34 48v10M76 48v10" stroke="#123" stroke-width="4"/><path d="M26 85q28 22 60 0" fill="none" stroke="#123" stroke-width="3.500"/><circle cx="54" cy="141" r="4.500" fill="#111"/></svg></a>
      <a href="#" aria-label="Launchpad"><svg viewBox="0 0 108 150"><circle cx="54" cy="70" r="49" fill="#c9d2d6"/><circle cx="54" cy="70" r="44" fill="#8f9a9f"/><path d="M80 43q-24 0-36 22l-12 3-8 13 14-2-5 11 9 4 9-6-1 15 12-11 2-13q18-12 16-36z" fill="#3c4143"/><circle cx="64" cy="59" r="6" fill="#aab3b7"/></svg></a>
      <a href="#" aria-label="Safari"><svg viewBox="0 0 108 150"><circle cx="54" cy="70" r="49" fill="#dfe7ee"/><circle cx="54" cy="70" r="45" fill="#2196ef"/><circle cx="54" cy="70" r="39" fill="none" stroke="#bfe0fa" stroke-width="5" stroke-dasharray="1.500 4"/><path d="M84 38L60 76 48 64z" fill="#f2493d"/><path d="M24 102l24-38 12 12z" fill="#f4f4f4"/></svg></a>
      <a href="#" aria-label="Chrome"><svg viewBox="0 0 108 150"><rect x="10" y="25" width="88" height="90" rx="14" fill="#fdfdfd"/><circle cx="54" cy="70" r="37" fill="#fbc92f"/><path d="M22 51A37 37 0 0 1 86 51H54L38 78z" fill="#e2423a"/><path d="M22 51a37 37 0 0 0 31 56l17-29-16 9-16-9z" fill="#2f9f52"/><circle cx="54" cy="70" r="18" fill="#fff"/><circle cx="54" cy="70" r="14" fill="#4a86ee"/><circle cx="54" cy="141" r="4.500" fill="#111"/></svg></a>
      <a href="#" aria-label="Mail"><svg viewBox="0 0 108 150"><g transform="rotate(-7 54 70)"><rect x="15" y="27" width="76" height="86" fill="#fff" stroke="#fff" stroke-width="5" stroke-dasharray="5 4"/><rect x="22" y="34" width="62" height="72" fill="#3d94de"/><path d="M22 90q30-16 62-4v20H22z" fill="#8ec5ee"/><path d="M28 44q6 20 20 20l30-8q-6 14-20 20l10 12-8 8-14-14-10-8z" fill="#503a22"/><path d="M46 64l16 6-4 12z" fill="#d9a24c"/></g><circle cx="80" cy="96" r="20" fill="none" stroke="#8c93a5" stroke-width="4"/><circle cx="54" cy="141" r="4.500" fill="#111"/></svg><span class="pip" style="right:-2px">50347</span></a>
      <a href="#" aria-label="Contacts"><svg viewBox="0 0 108 150"><path d="M84 28l10 2 3 66-14 8z" fill="#e9e9e9"/><path d="M87 46h9v15h-9z" fill="#27b7d8"/><path d="M88 62h9v18h-9z" fill="#6ecb3b"/><path d="M88 82h10v18H88z" fill="#f0a92e"/><path d="M9 26l74-8 7 94-73 10z" fill="#a3753f"/><path d="M9 26l10-1 8 96-10 1z" fill="#87602f"/><circle cx="52" cy="67" r="21" fill="none" stroke="#7d5828" stroke-width="3"/><circle cx="52" cy="60" r="9" fill="#7d5828"/><path d="M36 80q16-18 32 0-16 14-32 0z" fill="#7d5828"/></svg></a>
      <a href="#" aria-label="Calendar"><svg viewBox="0 0 108 150"><path d="M20 110l76-10 2 12-74 10z" fill="#54575c"/><path d="M10 27l74-6 11 84-74 11z" fill="#fbfbfb"/><path d="M10 27l74-6 3 24-74 7z" fill="#e8413b"/><text x="48" y="44" transform="rotate(-6 48 44)" font-size="18" font-weight="bold" fill="#fff" text-anchor="middle">FEB</text><text x="54" y="95" transform="rotate(-6 54 95)" font-size="48" fill="#222" text-anchor="middle">15</text></svg></a>
      <a href="#" aria-label="Notes"><svg viewBox="0 0 108 150"><g transform="rotate(-7 54 70)"><rect x="16" y="24" width="78" height="90" fill="#fdfcf4"/><rect x="16" y="24" width="78" height="18" fill="#f7cc3d"/><path d="M16 54h78M16 65h78M16 76h78M16 87h78M16 98h78" stroke="#ddd" stroke-width="3"/></g></svg></a>
      <a href="#" aria-label="Reminders"><svg viewBox="0 0 108 150"><g transform="rotate(-7 54 70)"><rect x="15" y="26" width="78" height="90" rx="5" fill="#fdfdfd"/><circle cx="28" cy="42" r="7" fill="#f48b2a"/><circle cx="28" cy="60" r="7" fill="#2b9df0"/><circle cx="28" cy="78" r="7" fill="#5fcf3d"/><circle cx="28" cy="96" r="7" fill="#c070d8"/><path d="M42 44h44M42 62h44M42 80h44M42 98h44" stroke="#ddd" stroke-width="3"/></g></svg><span class="pip" style="right:-1px">1</span></a>
      <a href="#" aria-label="Maps"><svg viewBox="0 0 108 150"><g transform="rotate(-7 50 70)"><rect x="10" y="30" width="80" height="84" fill="#f3efe2"/><path d="M14 36h56v12H14z" fill="#6cb54b"/><path d="M14 52h72" stroke="#3fa4e0" stroke-width="7"/><path d="M18 76l50 34H18z" fill="#f7c63b"/><path d="M40 110L72 44" stroke="#f7c63b" stroke-width="10"/><path d="M30 58h24l2 14-14 8-13-8z" fill="#3566b8"/><path d="M30 58h24v5H30z" fill="#d83c3c"/></g><circle cx="82" cy="91" r="24" fill="#eef0f2"/><circle cx="82" cy="91" r="16" fill="#fff" stroke="#8b96a2" stroke-width="3"/><text x="82" y="97" font-size="16" text-anchor="middle" fill="#345">3D</text></svg></a>
      <a href="#" aria-label="Photos"><svg viewBox="0 0 108 150"><circle cx="54" cy="70" r="49" fill="#f4f4f4"/><g class="petals"><rect x="41" y="28" width="26" height="42" rx="13" fill="#f79a2c"/><rect x="41" y="28" width="26" height="42" rx="13" fill="#dcd32f" transform="rotate(45 54 70)"/><rect x="41" y="28" width="26" height="42" rx="13" fill="#9bcb4b" transform="rotate(90 54 70)"/><rect x="41" y="28" width="26" height="42" rx="13" fill="#55b58a" transform="rotate(135 54 70)"/><rect x="41" y="28" width="26" height="42" rx="13" fill="#5e9dd2" transform="rotate(180 54 70)"/><rect x="41" y="28" width="26" height="42" rx="13" fill="#8f78bd" transform="rotate(225 54 70)"/><rect x="41" y="28" width="26" height="42" rx="13" fill="#c96b9c" transform="rotate(270 54 70)"/><rect x="41" y="28" width="26" height="42" rx="13" fill="#e95b47" transform="rotate(315 54 70)"/></g></svg></a>
      <a href="#" aria-label="Messages"><svg viewBox="0 0 108 150"><ellipse cx="54" cy="60" rx="49" ry="35" fill="#3ea5f5"/><path d="M20 80q2 20-4 32 20-4 30-22z" fill="#2d8ff0"/><ellipse cx="72" cy="88" rx="29" ry="22" fill="#f2f5f8"/><path d="M78 104q4 8 12 12 0-10 2-18z" fill="#f2f5f8"/><g fill="#1d4e86"><circle cx="60" cy="88" r="4.500"/><circle cx="72" cy="88" r="4.500"/><circle cx="84" cy="88" r="4.500"/></g></svg></a>
      <a href="#" aria-label="FaceTime"><svg viewBox="0 0 108 150"><rect x="8" y="27" width="88" height="78" rx="9" fill="#37d34b"/><rect x="22" y="48" width="44" height="36" rx="5" fill="#fff"/><path d="M68 62l16-10v32l-16-8z" fill="#fff"/><circle cx="82" cy="87" r="25" fill="#f0f3f0"/><path d="M70 76q2 20 22 24l5-6-8-6-5 3q-6-4-7-9l4-4-5-8z" fill="#2cbf40"/></svg></a>
      <a href="#" aria-label="iTunes"><svg viewBox="0 0 108 150"><defs><linearGradient id="mus" x1="1" y1="0" x2="0" y2="1"><stop offset="0" stop-color="#f8476b"/><stop offset=".55" stop-color="#b45be0"/><stop offset="1" stop-color="#3aaef5"/></linearGradient></defs><circle cx="54" cy="70" r="49" fill="url(#mus)"/><circle cx="54" cy="70" r="43" fill="#f8f8fa"/><path d="M42 44l32-7v50a10 8 0 1 1-6-8V52l-20 4v38a10 8 0 1 1-6-8z" fill="url(#mus)"/></svg></a>
      <a href="#" aria-label="iBooks"><svg viewBox="0 0 108 150"><circle cx="54" cy="70" r="49" fill="#f2e4d6"/><circle cx="54" cy="70" r="45" fill="#f07f1e"/><path d="M24 48q16-6 28 4v42q-12-8-28-4zM84 48q-16-6-28 4v42q12-8 28-4z" fill="#fdf6ee"/></svg></a>
      <a href="#" aria-label="App Store"><svg viewBox="0 0 108 150"><circle cx="54" cy="70" r="49" fill="#dcebf7"/><circle cx="54" cy="70" r="45" fill="#1f8ff2"/><path d="M56 38L34 96M50 38l26 58M24 78h60" stroke="#fff" stroke-width="6" stroke-linecap="round" fill="none"/></svg></a>
      <a href="#" aria-label="System Preferences"><svg viewBox="0 0 108 150"><rect x="8" y="24" width="94" height="92" rx="4" fill="#a9b0b3"/><circle cx="55" cy="70" r="41" fill="#2d2e30"/><circle cx="55" cy="70" r="32" fill="none" stroke="#9a9c9e" stroke-width="7" stroke-dasharray="4 2"/><circle cx="55" cy="70" r="24" fill="none" stroke="#8b8d8f" stroke-width="5"/><path d="M55 70h26M55 70L42 47M55 70L42 93" stroke="#9a9c9e" stroke-width="5"/><circle cx="55" cy="70" r="8" fill="#777"/></svg></a>
      <a href="#" aria-label="Zoom"><svg viewBox="0 0 108 150"><rect x="4" y="20" width="100" height="100" rx="25" fill="#3d85f7"/><rect x="23" y="52" width="42" height="36" rx="8" fill="#fff"/><path d="M68 64l17-11v35l-17-11z" fill="#fff"/><circle cx="54" cy="141" r="4.500" fill="#111"/></svg></a>
      <a href="#" aria-label="Excel"><svg viewBox="0 0 108 150"><rect x="56" y="31" width="48" height="78" fill="#fff"/><path d="M66 44h32M66 56h32M66 68h32M66 80h32M66 92h32" stroke="#2f8b57" stroke-width="8"/><path d="M81 38v60" stroke="#fff" stroke-width="2"/><path d="M5 31l60-11v100L5 108z" fill="#25794a"/><text x="33" y="85" font-size="42" font-weight="bold" fill="#fff" text-anchor="middle">X</text><circle cx="54" cy="141" r="4.500" fill="#111"/></svg></a>
      <a href="#" aria-label="Word"><svg viewBox="0 0 108 150"><rect x="56" y="31" width="46" height="78" fill="#fff"/><path d="M64 44h32M64 56h32M64 68h32M64 80h32M64 92h32" stroke="#3a4c68" stroke-width="4"/><path d="M3 31l60-11v100L3 108z" fill="#2f62b0"/><text x="31" y="83" font-size="38" font-weight="bold" fill="#fff" text-anchor="middle">W</text><circle cx="54" cy="141" r="4.500" fill="#111"/></svg></a>
      <a href="#" aria-label="PowerPoint"><svg viewBox="0 0 108 150"><rect x="56" y="33" width="47" height="74" fill="#fff"/><path d="M78 42a15 15 0 1 0 15 15H78z" fill="#444"/><path d="M82 40a14 14 0 0 1 13 13H82z" fill="#dd4b32"/><path d="M64 84h32M64 94h32" stroke="#e07a68" stroke-width="4"/><path d="M3 31l60-11v100L3 108z" fill="#e2492d"/><text x="31" y="85" font-size="42" font-weight="bold" fill="#fff" text-anchor="middle">P</text><circle cx="54" cy="141" r="4.500" fill="#111"/></svg></a>
    </nav>
    <span class="sep"></span>
    <a href="#" aria-label="Documents"><svg viewBox="0 0 108 150"><path d="M18 16h74v80H18z" fill="#dfe2e6"/><path d="M62 26h26v14H62z" fill="#4a5260"/><path d="M14 60h84v35H14z" fill="#e9ecef"/><path d="M22 28h46l24 26v66H22z" fill="#fff"/><path d="M68 28v26h24z" fill="#d5d8dc"/></svg></a>
    <a href="#" aria-label="Trash" style="margin-left:5px"><svg viewBox="0 0 108 150"><path d="M12 26h84l-10 88q-32 10-62 0z" fill="#dcdedf"/><path d="M24 46l10 60M44 44l2 68M64 44l-2 68M84 46l-8 58" stroke="#c3c6c8" stroke-width="5"/><ellipse cx="54" cy="26" rx="42" ry="9" fill="#f2f2f2"/><path d="M22 26l12-10 12 6 12-8 10 8 14-4 6 8-34 8z" fill="#888d92"/><path d="M34 18l8 6M68 22l8-4" stroke="#d0653c" stroke-width="4"/><path d="M50 20l8 8" stroke="#3a7fb5" stroke-width="4"/></svg></a>
  </div>
</footer>

<script src="https://cdn.jsdelivr.net/npm/bootstrap@5.3.0/dist/js/bootstrap.bundle.min.js"></script>
<script>
// Column widths: row heads first, the last column fills what is left
const widths = [18, 87, 71, 99, 42, 55, 42, 43, 42, 42, 43, 42, 43, 42, 42, 43, 42, 43, 42, 42, 43];
const letters = "ABCDEFGHIJKLMNOPQRST".split("");
const head = { A: "Product", B: "Current Revenue", C: "Projected Goal Revenue" };
const names = ["Streaming Services", "Web Services", "Wireless Devices", "Tablet Devices", "Phone Devices"];
const first = [["55,000", "75,000"], ["25,000", "30,000"], ["70,000", "85,000"], ["150,000", "165,000"], ["500,000", "645,000"]];
const data = { 1: { A: "Your Product Portfolio" }, 9: { B: "800,000", C: "1,000,000" } };
[3, 13, 23].forEach(start => {
  data[start] = { ...head };
  names.forEach((name, i) => data[start + 1 + i] = { A: name });
});
first.forEach(([b, c], i) => Object.assign(data[4 + i], { B: b, C: c }));
data[5].E = "Initial Model";
data[16].E = "Problem #1";
data[25].E = "Problem #2";

document.getElementById("cols").innerHTML = widths.map(w => `<col style="width:${w}px">`).join("") + "<col>";
document.getElementById("letters").innerHTML = '<th><div class="corner"></div></th>' +
  letters.map(l => `<th scope="col"${l === "F" ? ' class="sel"' : ""}>${l}</th>`).join("") + "<th></th>";
document.getElementById("rows").innerHTML = Array.from({ length: 31 }, (_, i) => {
  const r = i + 1, row = data[r] || {};
  const cells = [...letters, ""].map(l => {
    const v = row[l] || "";
    const cls = l === "F" && r === 17 ? "cur" : /^\d/.test(v) ? "num" : v === "Product" ? "fw-bold" : "";
    return `<td${cls ? ` class="${cls}"` : ""}>${v}</td>`;
  }).join("");
  return `<tr><th scope="row"${r === 17 ? ' class="sel"' : ""}>${r}</th>${cells}</tr>`;
}).join("");
</script>
</body>
</html>
